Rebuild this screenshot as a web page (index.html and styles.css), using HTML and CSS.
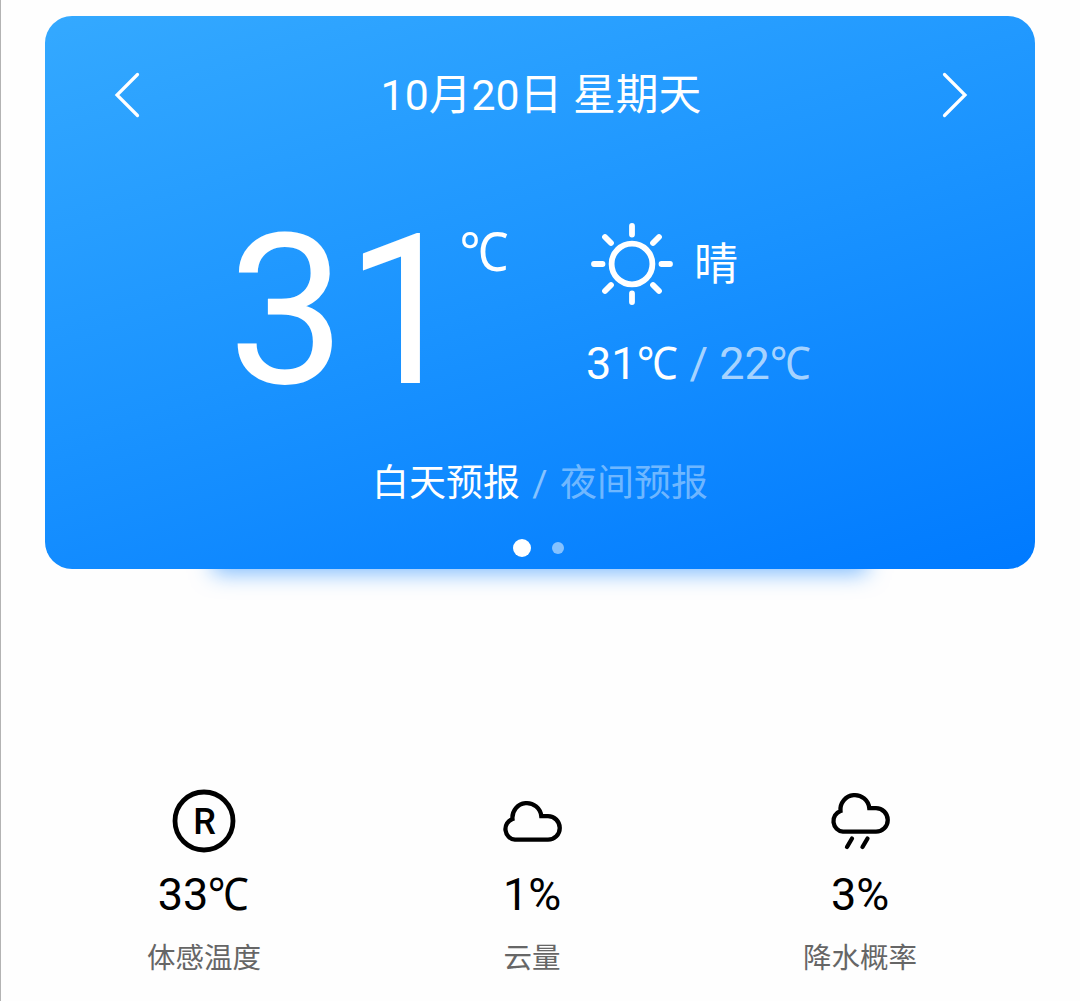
FILE: index.html
```html
<!DOCTYPE html>
<html lang="zh-CN">
<head>
<meta charset="utf-8">
<title>天气预报</title>
<link rel="stylesheet" href="styles.css">
</head>
<body>
<main class="page">
  <section class="card">
    <header class="card-header">
      <svg class="chevron" width="26" height="46" viewBox="0 0 26 46"><path d="M23.500 2.500 3 23l20.500 20.500"/></svg>
      <h1 class="date">10月20日 星期天</h1>
      <svg class="chevron" width="26" height="46" viewBox="0 0 26 46"><path d="M2.500 2.500 23 23 2.500 43.500"/></svg>
    </header>
    <div class="now">
      <div class="temp">31</div>
      <div class="unit"><span class="degree">℃</span></div>
      <div class="summary">
        <div class="condition">
          <svg class="sun" width="84" height="84" viewBox="-42 -42 84 84">
            <circle r="20.400"/>
            <path d="M0-38v8.500M0 38v-8.500M-38 0h8.500M38 0h-8.500M-27-27l6 6M27-27l-6 6M-27 27l6-6M27 27l-6-6"/>
          </svg>
          <span class="condition-name">晴</span>
        </div>
        <div class="range">31<span class="degree">℃</span> <span class="low">/ 22<span class="degree">℃</span></span></div>
      </div>
    </div>
    <nav class="tabs">
      <span>白天预报</span><span class="slash">/</span><span class="night">夜间预报</span>
    </nav>
    <div class="dots"><i class="dot active"></i><i class="dot"></i></div>
  </section>
  <section class="stats">
    <div class="stat">
      <svg class="icon" width="66" height="66" viewBox="0 0 66 66">
        <circle cx="33" cy="33" r="29" stroke-width="4.800"/>
        <text class="letter" x="33.500" y="46" text-anchor="middle">R</text>
      </svg>
      <div class="value">33<span class="degree">℃</span></div>
      <div class="label">体感温度</div>
    </div>
    <div class="stat">
      <svg class="icon" width="66" height="66" viewBox="0 0 66 66">
        <path d="M13.500 31A14.400 14.400 0 1 1 42.300 28.200H49A11.700 11.700 0 0 1 49 51.700H16A10.700 10.700 0 0 1 13.500 31Z"/>
      </svg>
      <div class="value">1%</div>
      <div class="label">云量</div>
    </div>
    <div class="stat">
      <svg class="icon" width="66" height="66" viewBox="0 0 66 66">
        <path d="M13.500 23A14.400 14.400 0 1 1 42.300 20.200H49A11.700 11.700 0 0 1 49 43.700H16A10.700 10.700 0 0 1 13.500 23ZM25 50.500l-5 8.500M40.500 50.500l-5 8.500"/>
      </svg>
      <div class="value">3%</div>
      <div class="label">降水概率</div>
    </div>
  </section>
</main>
</body>
</html>
```
FILE: styles.css
```css
* {
  box-sizing: border-box;
}

body {
  margin: 0;
  background: #fefefe;
  font-family: Roboto, "Noto Sans CJK SC", sans-serif;
}

.page {
  height: 1001px;
  padding: 16px 44px 0;
  border-left: 1px solid #b3b3b3;
  overflow: hidden;
}

.card {
  position: relative;
  width: 990px;
  height: 552.5px;
  padding-top: 49px;
  border-radius: 27px;
  background: linear-gradient(163deg, #34a9ff 0%, #1a93ff 50%, #007aff 100%);
  color: #fff;
}

/* Soft glow below the card, narrower than the card itself */
.card::before {
  content: "";
  position: absolute;
  z-index: -1;
  left: 168px;
  right: 168px;
  bottom: 0;
  height: 40px;
  box-shadow: 0 4px 22px rgba(0, 122, 255, 0.52);
}

.card-header {
  display: flex;
  align-items: center;
  justify-content: space-between;
  height: 60px;
  padding: 0 67px 0 69px;
}

.chevron,
.sun {
  fill: none;
  stroke: #fff;
  stroke-width: 3.2;
  stroke-linecap: round;
}

.date {
  margin: 0;
  font-size: 42.8px;
  font-weight: 400;
  line-height: 60px;
}

.now {
  display: flex;
  height: 210px;
  margin-top: 80px;
  padding-left: 183px;
}

.temp {
  width: 229px;
  font-size: 209px;
  line-height: 213px;
}

.unit {
  width: 128px;
  height: 54px;
  margin-top: 18px;
  font-size: 54px;
  line-height: 54px;
}

/* Condensed a little to sit tight against the digits */
.degree {
  display: inline-block;
  height: 1em;
  font-family: "Noto Sans", sans-serif;
  line-height: 1;
  transform: scaleX(0.91);
}

.summary {
  padding-top: 17px;
}

.condition {
  display: flex;
  align-items: center;
  gap: 20px;
  height: 84px;
  padding-left: 5px;
}

.sun {
  stroke-width: 5.8;
}

.condition-name {
  padding-top: 2px;
  font-size: 44px;
  line-height: 44px;
}

.range {
  height: 60px;
  margin-top: 28px;
  padding-left: 1px;
  font-size: 45px;
  line-height: 60px;
  white-space: nowrap;
}

.range .degree,
.value .degree {
  margin: 0 -1px 0 -2px;
}

.low {
  color: rgba(255, 255, 255, 0.65);
}

.tabs {
  display: flex;
  justify-content: center;
  margin-top: 44px;
  font-size: 37px;
  line-height: 50px;
}

.slash {
  width: 40px;
  text-align: center;
  color: rgba(255, 255, 255, 0.5);
}

.night {
  color: rgba(255, 255, 255, 0.42);
}

.dots {
  display: flex;
  align-items: center;
  gap: 21px;
  height: 18px;
  margin-top: 30px;
  padding-left: 468px;
}

.dot {
  width: 12px;
  height: 12px;
  border-radius: 50%;
  background: rgba(255, 255, 255, 0.5);
}

.dot.active {
  width: 18px;
  height: 18px;
  background: #fff;
}

.stats {
  display: grid;
  grid-template-columns: repeat(3, 328px);
  width: 984px;
  margin: 219.5px 0 0 -5px;
}

.stat {
  display: flex;
  flex-direction: column;
  align-items: center;
  color: #000;
}

.icon {
  fill: none;
  stroke: #000;
  stroke-width: 4.3;
  stroke-linecap: round;
}

.letter {
  fill: #000;
  stroke: none;
  font-size: 36px;
  font-weight: 500;
}

.value {
  height: 60px;
  margin-top: 11px;
  font-size: 45px;
  line-height: 60px;
}

.label {
  margin-top: 14px;
  color: #666;
  font-size: 28.5px;
  line-height: 40px;
}
```
